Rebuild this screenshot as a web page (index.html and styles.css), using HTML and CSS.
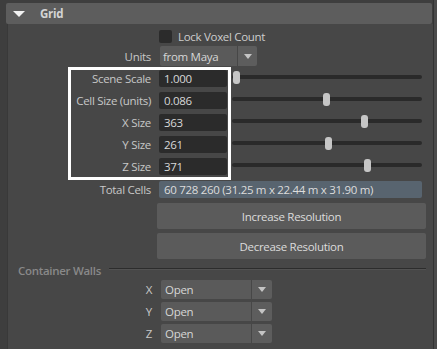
FILE: index.html
```html
<!DOCTYPE html>
<html lang="en">
<head>
    <meta charset="UTF-8">
    <meta name="viewport" content="width=device-width, initial-scale=1.0">
    <title>Grid Attributes</title>
    <link rel="stylesheet" href="styles.css">
</head>
<body>
    <div class="window">
        <div class="main">
            <div class="frame-header">
                <span class="caret"></span>
                <span class="frame-title">Grid</span>
            </div>

            <div class="frame-body">
                <div class="row check-row">
                    <span></span>
                    <label class="check"><span class="check-box"></span>Lock Voxel Count</label>
                </div>

                <div class="row">
                    <span class="label">Units</span>
                    <div class="combo combo-units">
                        <span class="combo-value">from Maya</span>
                        <span class="combo-btn"><span class="arrow"></span></span>
                    </div>
                </div>

                <div class="row slider-row">
                    <span class="label">Scene Scale</span>
                    <span class="field">1.000</span>
                    <div class="slider"><span class="track"></span><span class="thumb" style="left: 2px"></span></div>
                </div>
                <div class="row slider-row">
                    <span class="label">Cell Size (units)</span>
                    <span class="field">0.086</span>
                    <div class="slider"><span class="track"></span><span class="thumb" style="left: 92px"></span></div>
                </div>
                <div class="row slider-row">
                    <span class="label">X Size</span>
                    <span class="field">363</span>
                    <div class="slider"><span class="track"></span><span class="thumb" style="left: 130px"></span></div>
                </div>
                <div class="row slider-row">
                    <span class="label">Y Size</span>
                    <span class="field">261</span>
                    <div class="slider"><span class="track"></span><span class="thumb" style="left: 94px"></span></div>
                </div>
                <div class="row slider-row">
                    <span class="label">Z Size</span>
                    <span class="field">371</span>
                    <div class="slider"><span class="track"></span><span class="thumb" style="left: 133px"></span></div>
                </div>

                <div class="row total-row">
                    <span class="label">Total Cells</span>
                    <span class="field field-info">60 728 260 (31.25 m x 22.44 m x 31.90 m)</span>
                </div>

                <div class="buttons">
                    <button class="btn">Increase Resolution</button>
                    <button class="btn">Decrease Resolution</button>
                </div>

                <div class="section-title">
                    <span>Container Walls</span>
                    <span class="rule"></span>
                </div>

                <div class="wall-row">
                    <span class="label">X</span>
                    <div class="combo combo-wall">
                        <span class="combo-value">Open</span>
                        <span class="combo-btn"><span class="arrow"></span></span>
                    </div>
                </div>
                <div class="wall-row">
                    <span class="label">Y</span>
                    <div class="combo combo-wall">
                        <span class="combo-value">Open</span>
                        <span class="combo-btn"><span class="arrow"></span></span>
                    </div>
                </div>
                <div class="wall-row">
                    <span class="label">Z</span>
                    <div class="combo combo-wall">
                        <span class="combo-value">Open</span>
                        <span class="combo-btn"><span class="arrow"></span></span>
                    </div>
                </div>
            </div>

            <!-- annotation box drawn over the grid size fields -->
            <div class="highlight"></div>
        </div>
        <div class="scrollbar"></div>
    </div>
</body>
</html>
```

FILE: styles.css
```css
* {
    margin: 0;
    padding: 0;
    box-sizing: border-box;
}

body {
    font-family: "Open Sans", "Noto Sans", sans-serif;
    font-size: 11.5px;
    letter-spacing: -0.3px;
    background: #3e3e3e;
    color: #c8c8c8;
    width: 437px;
    height: 349px;
    overflow: hidden;
}

.window {
    display: flex;
    height: 349px;
}

.main {
    position: relative;
    width: 433px;
    padding-top: 3px;
    padding-left: 6px;
}

.scrollbar {
    width: 4px;
    background: #4b4b4b;
    border-left: 1px solid #333;
}

.frame-header {
    display: flex;
    align-items: center;
    height: 21px;
    margin-right: 1px;
    background: #5d5d5d;
    border-radius: 2px;
}

.caret {
    width: 0;
    height: 0;
    margin-left: 7px;
    border-left: 6px solid transparent;
    border-right: 6px solid transparent;
    border-top: 6px solid #f2f2f2;
}

.frame-title {
    margin-left: 15px;
    font-weight: 700;
    color: #d4d4d4;
}

.frame-body {
    height: 330px;
    margin-left: 1px;
    padding-top: 5px;
    background: #474747;
    border-left: 1px solid #393939;
}

.row {
    display: grid;
    grid-template-columns: 143px 1fr;
    column-gap: 8px;
    align-items: center;
    height: 22px;
    padding-right: 11px;
}

.label {
    text-align: right;
    white-space: nowrap;
    color: #c8c8c8;
}

.check-row {
    height: 13px;
    margin-bottom: 3px;
}

.check {
    display: flex;
    align-items: center;
    gap: 6px;
    color: #cdcdcd;
}

.check-box {
    width: 13px;
    height: 13px;
    background: #2b2b2b;
    border-radius: 2px;
}

.combo {
    display: flex;
    gap: 1px;
}

.combo-value {
    display: flex;
    align-items: center;
    padding-left: 3px;
    background: #5a5a5a;
    border-radius: 2px 0 0 2px;
    color: #d6d6d6;
}

.combo-btn {
    display: flex;
    align-items: center;
    justify-content: center;
    background: #5d5d5d;
    border-radius: 0 2px 2px 0;
}

.arrow {
    width: 0;
    height: 0;
    border-left: 4px solid transparent;
    border-right: 4px solid transparent;
    border-top: 5px solid #c4c4c4;
}

.combo-units {
    margin-left: 1px;
    height: 20px;
}

.combo-units .combo-value {
    width: 77px;
}

.combo-units .combo-btn {
    width: 19px;
}

.slider-row {
    grid-template-columns: 143px 68px 1fr;
}

.field {
    display: flex;
    align-items: center;
    height: 17px;
    padding-left: 5px;
    background: #2b2b2b;
    border-radius: 2px;
    color: #d8d8d8;
    white-space: nowrap;
}

.slider {
    position: relative;
    height: 14px;
    margin-left: -4px;
}

.track {
    position: absolute;
    left: 1px;
    right: 0;
    top: 4px;
    height: 4px;
    background: #2a2a2a;
    border-radius: 2px;
}

.thumb {
    position: absolute;
    top: 0;
    width: 7px;
    height: 13px;
    background: #c6c6c6;
    border-radius: 3px;
}

.total-row {
    margin-top: 1px;
}

.field-info {
    background: #58646f;
    color: #dcdcdc;
}

.buttons {
    display: flex;
    flex-direction: column;
    gap: 4px;
    margin-top: 3px;
    padding-left: 149px;
    padding-right: 7px;
}

.btn {
    height: 26px;
    font-family: inherit;
    font-size: 11.5px;
    letter-spacing: -0.3px;
    color: #dcdcdc;
    background: #5b5b5b;
    border: none;
    border-radius: 2px;
}

.section-title {
    display: flex;
    align-items: center;
    gap: 8px;
    height: 16px;
    margin-top: 3px;
    padding-left: 10px;
    padding-right: 7px;
    font-weight: 600;
    color: #898989;
}

.rule {
    flex: 1;
    height: 2px;
    margin-bottom: 3px;
    border-top: 1px solid #2c2c2c;
    border-bottom: 1px solid #525252;
}

.wall-row {
    display: grid;
    grid-template-columns: 144px 1fr;
    column-gap: 9px;
    align-items: center;
    height: 22px;
}

.wall-row:first-of-type {
    margin-top: 1px;
}

.combo-wall {
    height: 19px;
}

.combo-wall .combo-value {
    width: 90px;
    padding-left: 4px;
}

.combo-wall .combo-btn {
    width: 20px;
}

.highlight {
    position: absolute;
    left: 68px;
    top: 67px;
    width: 163px;
    height: 113px;
    border: 3px solid #ffffff;
}
```
